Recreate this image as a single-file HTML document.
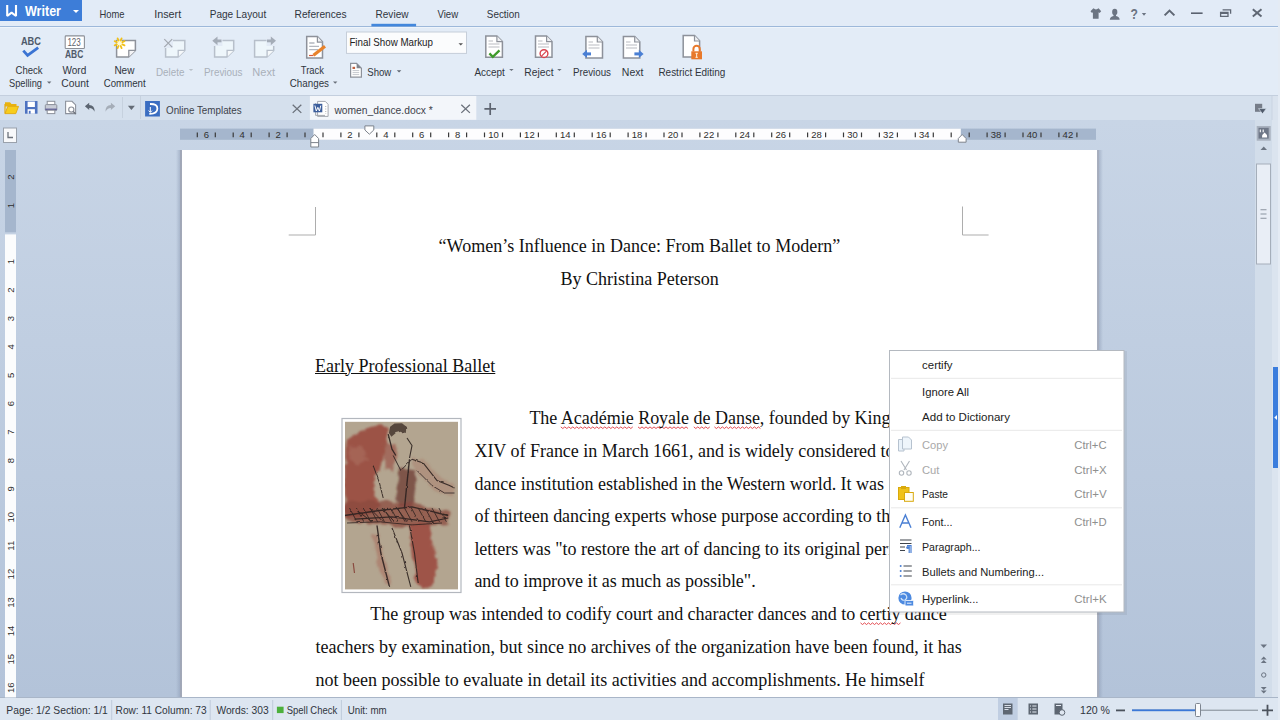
<!DOCTYPE html>
<html><head><meta charset="utf-8">
<style>
*{margin:0;padding:0;box-sizing:border-box}
html,body{width:1280px;height:720px;overflow:hidden;background:#c6d3e5;font-family:"Liberation Sans",sans-serif;color:#2b2b2b}
.a{position:absolute}
.t{position:absolute;white-space:pre;font-size:11px;line-height:13px;color:#333}
.d{position:absolute;white-space:pre;font-family:"Liberation Serif",serif;font-size:18.05px;line-height:20px;color:#111}
#menubar{left:0;top:0;width:1280px;height:26px;background:#e2ebf7}
#ribbon{left:0;top:25.5px;width:1280px;height:69.5px;background:#e3ecf7;border-top:1.5px solid #9db8da}
#qbar{left:0;top:95px;width:1280px;height:25.5px;background:#d5e0ed;border-top:1px solid #c4cfde;border-bottom:1px solid #bfcad9}
#work{left:0;top:120px;width:1280px;height:577px;background:linear-gradient(#c8d5e6,#b3c3d9)}
#status{left:0;top:697px;width:1280px;height:23px;background:#dde6f1;border-top:1px solid #a9b6c8}
#page{left:182px;top:150px;width:915px;height:547px;background:#fff}
#shl{left:176px;top:150px;width:6px;height:547px;background:linear-gradient(to right,rgba(140,155,180,0),rgba(140,155,180,.45) 60%,#a0a7b7 75%,#a3a9b8)}
#shr{left:1097px;top:150px;width:6px;height:547px;background:linear-gradient(to left,rgba(140,155,180,0),rgba(140,155,180,.45) 60%,#a6adbd 75%,#a9b0bf)}
</style></head>
<body>
<div id="menubar" class="a"></div>
<div id="ribbon" class="a"></div>
<div id="qbar" class="a"></div>
<div id="work" class="a"></div>
<div id="shl" class="a"></div><div id="shr" class="a"></div><div id="page" class="a"></div>
<div id="status" class="a"></div>

<!-- UI chrome svg -->
<svg class="a" style="left:0;top:0" width="1280" height="720" viewBox="0 0 1280 720" font-family="Liberation Sans" font-size="10.5">
<!-- Writer button -->
<rect x="0" y="0" width="82" height="21" fill="#3d7dd8"/>
<path d="M7.2,4.9 V16 L11.6,12.6 L16,16 V4.9" stroke="#fff" stroke-width="2.1" fill="none" stroke-linejoin="bevel"/>
<text x="25" y="16.2" font-size="14" font-weight="bold" fill="#fff" textLength="36" lengthAdjust="spacingAndGlyphs">Writer</text>
<path d="M73,10 L79,10 L76,13 Z" fill="#fff"/>
<!-- menu -->
<g fill="#30353d">
<text x="99.5" y="17.5" textLength="25" lengthAdjust="spacingAndGlyphs">Home</text>
<text x="154.2" y="17.5" textLength="27" lengthAdjust="spacingAndGlyphs">Insert</text>
<text x="209.7" y="17.5" textLength="56.5" lengthAdjust="spacingAndGlyphs">Page Layout</text>
<text x="294.6" y="17.5" textLength="52" lengthAdjust="spacingAndGlyphs">References</text>
<text x="375.5" y="17.5" textLength="33" lengthAdjust="spacingAndGlyphs">Review</text>
<text x="437.4" y="17.5" textLength="20.7" lengthAdjust="spacingAndGlyphs">View</text>
<text x="486.8" y="17.5" textLength="33" lengthAdjust="spacingAndGlyphs">Section</text>
</g>
<rect x="0" y="27" width="1278" height="1" fill="#eef4fb"/><rect x="371.4" y="23.8" width="44.7" height="2.6" fill="#4387dc"/>
<!-- title bar right icons -->
<g fill="#6b7482" stroke="none">
<path d="M1090.5,11.2 L1093.4,8.3 Q1096,10.6 1098.6,8.3 L1101.2,11.2 L1099.6,12.9 L1098.6,12.2 V18.8 H1092.9 V12.2 L1092,12.9 Z"/>
<ellipse cx="1114.75" cy="11.9" rx="2.6" ry="3.2"/>
<path d="M1113.5,14.5 H1116 V16 Q1119.4,16.4 1119.7,19.8 H1109.8 Q1110.1,16.4 1113.5,16 Z"/>
</g>
<text x="1130.6" y="18.8" font-size="14" font-weight="bold" fill="#6b7482" textLength="7.4" lengthAdjust="spacingAndGlyphs">?</text>
<path d="M1141.8,13.1 H1146.2 L1144,15.7 Z" fill="#6b7482"/>
<path d="M1164.6,15.4 L1169.5,10.6 L1174.4,15.4" stroke="#5f6774" stroke-width="2" fill="none"/>
<rect x="1191" y="12.4" width="11.6" height="1.6" fill="#5a6270"/>
<path d="M1222.6,9.8 H1230.6 V13.8 M1220.6,12.4 H1228 V16.3 H1220.6 Z M1220.6,13.4 H1228" stroke="#5f6774" stroke-width="1.3" fill="none"/>
<path d="M1252.8,9.3 L1261.5,16.4 M1261.5,9.3 L1252.8,16.4" stroke="#5f6774" stroke-width="2" fill="none"/>
</svg>

<!-- ribbon -->
<svg class="a" style="left:0;top:0" width="1280" height="720" viewBox="0 0 1280 720" font-family="Liberation Sans" font-size="10.5">
<!-- Check spelling -->
<text x="20.9" y="45.4" font-size="10.8" font-weight="bold" fill="#4f5a6a" textLength="20" lengthAdjust="spacingAndGlyphs">ABC</text>
<path d="M23.3,50.6 L27.6,55.4 L38.2,47.6" stroke="#3b74d3" stroke-width="2.8" fill="none"/>
<!-- Word count -->
<rect x="65.2" y="35.9" width="19.2" height="12.6" rx="0.8" fill="#fff" stroke="#8b8f97" stroke-width="1.1"/>
<text x="67.4" y="45.6" font-size="10.3" fill="#5f646d" textLength="13.4" lengthAdjust="spacingAndGlyphs">123</text>
<text x="65" y="58" font-size="10.8" font-weight="bold" fill="#4f5a6a" textLength="18.3" lengthAdjust="spacingAndGlyphs">ABC</text>
<!-- New comment -->
<path d="M116.6,40.6 H135.4 V50.4 L128.6,57 H116.6 Z" fill="#fff" stroke="#8e929b" stroke-width="1.5"/>
<path d="M135.4,50.4 H128.8 V57" fill="#f4f4f6" stroke="#8e929b" stroke-width="1.3"/>
<circle cx="119.6" cy="43.25" r="3.2" fill="#fff8d0"/><path d="M122.4,44.4 L124.5,45.3 M120.7,46.0 L121.6,48.1 M118.5,46.0 L117.6,48.1 M116.8,44.4 L114.7,45.3 M116.8,42.1 L114.7,41.2 M118.5,40.5 L117.6,38.4 M120.7,40.5 L121.6,38.4 M122.4,42.1 L124.5,41.2" stroke="#f0c01a" stroke-width="1.8" stroke-linecap="round"/>
<!-- Delete -->
<path d="M165.6,40.6 H184.8 V50.4 L178,57 H165.6 Z" fill="#eef6fb" stroke="#b7bfca" stroke-width="1.5"/>
<path d="M184.8,50.4 H178.2 V57" fill="#f6f9fb" stroke="#b7bfca" stroke-width="1.3"/>
<rect x="163" y="38" width="10" height="10" fill="#e3ebf6"/>
<path d="M164.3,39.2 L172.2,47.2 M172.2,39.2 L164.3,47.2" stroke="#a2a8b0" stroke-width="1.2"/>
<!-- Previous disabled -->
<path d="M214.6,40.6 H233.7 V50.4 L226.9,57 H214.6 Z" fill="#eef6fb" stroke="#b7bfca" stroke-width="1.5"/>
<path d="M233.7,50.4 H227.1 V57" fill="#f6f9fb" stroke="#b7bfca" stroke-width="1.3"/>
<rect x="211" y="36" width="11.5" height="10" fill="#e3ebf6"/>
<path d="M212.3,40.8 L217.5,36.4 V45.2 Z" fill="#a4acb7"/><rect x="216.5" y="39.5" width="5" height="2.8" fill="#a4acb7"/>
<!-- Next disabled -->
<path d="M254.6,40.6 H273.7 V50.4 L266.9,57 H254.6 Z" fill="#eef6fb" stroke="#b7bfca" stroke-width="1.5"/>
<path d="M273.7,50.4 H267.1 V57" fill="#f6f9fb" stroke="#b7bfca" stroke-width="1.3"/>
<rect x="266.5" y="36" width="11" height="10" fill="#e3ebf6"/>
<path d="M276,40.8 L270.8,36.4 V45.2 Z" fill="#a4acb7"/><rect x="267" y="39.5" width="4.5" height="2.8" fill="#a4acb7"/>
<!-- Track changes -->
<path d="M306.7,36.6 H317.4 L322.5,41.9 V58 H306.7 Z" fill="#fff" stroke="#8d919a" stroke-width="1.5"/>
<path d="M317.4,36.6 V42.2 H322.5" fill="#eef0f3" stroke="#8d919a" stroke-width="1.2"/>
<path d="M309.2,43 H314.5 M309.2,46.3 H319 M309.2,49.6 H318" stroke="#b3b7bf" stroke-width="1.3"/>
<path d="M313.5,55.3 L325,46.3" stroke="#e8822a" stroke-width="3.2"/>
<path d="M309,55.5 H313.5" stroke="#d55a3a" stroke-width="1.2"/>
<!-- combo -->
<rect x="346.5" y="32" width="120" height="21.4" fill="#fbfcfd" stroke="#c6ced9" stroke-width="1"/>
<text x="349.4" y="46.4" font-size="11" fill="#222" textLength="83.6" lengthAdjust="spacingAndGlyphs">Final Show Markup</text>
<path d="M458.5,43.2 H463 L460.75,45.4 Z" fill="#555"/>
<!-- show -->
<path d="M350.6,63.4 H356.6 L361.4,68.2 V77.2 H350.6 Z" fill="#fff" stroke="#8d919a" stroke-width="1.2"/><path d="M356.6,63.4 L361.4,68.2 H356.6 Z" fill="#7f848d"/>
<rect x="352.5" y="66.8" width="2.6" height="2.2" fill="#c0603f"/>
<path d="M352.6,70.6 H359.2 M352.6,72.6 H359.2 M352.6,74.6 H359.2" stroke="#b5b9c0" stroke-width="0.8"/>
<path d="M396.8,70.2 H401.3 L399.05,72.6 Z" fill="#5f6670"/>
<!-- Accept -->
<path d="M485.8,36 H496.9 L502.4,41.5 V57.2 H485.8 Z" fill="#fff" stroke="#8d919a" stroke-width="1.5"/>
<path d="M496.9,36 V41.6 H502.4" fill="#eef0f3" stroke="#8d919a" stroke-width="1.2"/>
<path d="M488.5,41 H493 M488.5,44 H499.5 M488.5,47 H499.5" stroke="#b9bcc2" stroke-width="1.2"/>
<path d="M489.4,53.4 L492.8,56.8 L499.5,50.3" stroke="#3f9b2c" stroke-width="2.3" fill="none"/>
<!-- Reject -->
<path d="M535.5,36 H546.6 L552,41.5 V57.2 H535.5 Z" fill="#fff" stroke="#8d919a" stroke-width="1.5"/>
<path d="M546.6,36 V41.6 H552" fill="#eef0f3" stroke="#8d919a" stroke-width="1.2"/>
<path d="M538,41 H542.5 M538,44 H549 M538,47 H549" stroke="#b9bcc2" stroke-width="1.2"/>
<circle cx="544" cy="53.6" r="3.9" fill="#fff" stroke="#d9434e" stroke-width="1.4"/>
<path d="M541.5,56.1 L546.5,51.1" stroke="#d9434e" stroke-width="1.2"/>
<!-- Previous -->
<path d="M585.9,36.6 H597.3 L602.5,41.9 V58 H585.9 Z" fill="#fff" stroke="#8d919a" stroke-width="1.5"/>
<path d="M597.3,36.6 V42 H602.5" fill="#eef0f3" stroke="#8d919a" stroke-width="1.2"/>
<path d="M588.5,42 H593 M588.5,45 H599.5 M588.5,48 H599.5" stroke="#b9bcc2" stroke-width="1.2"/>
<path d="M582.2,53.9 L587,49.8 V58 Z" fill="#4a7fd4"/><rect x="586" y="52.4" width="5" height="3" fill="#4a7fd4"/>
<!-- Next -->
<path d="M623.4,36.6 H634.7 L639.8,41.9 V58 H623.4 Z" fill="#fff" stroke="#8d919a" stroke-width="1.5"/>
<path d="M634.7,36.6 V42 H639.8" fill="#eef0f3" stroke="#8d919a" stroke-width="1.2"/>
<path d="M626,42 H630.5 M626,45 H637 M626,48 H637" stroke="#b9bcc2" stroke-width="1.2"/>
<path d="M643.6,53.9 L638.8,49.8 V58 Z" fill="#4a7fd4"/><rect x="634.4" y="52.4" width="5" height="3" fill="#4a7fd4"/>
<!-- Restrict -->
<path d="M683.2,35.6 H694.5 L699.6,40.9 V57 H683.2 Z" fill="#fff" stroke="#8d919a" stroke-width="1.5"/>
<path d="M694.5,35.6 V41 H699.6" fill="#eef0f3" stroke="#8d919a" stroke-width="1.2"/>
<path d="M693.4,51.5 V49 A3.2,3.2 0 0 1 699.8,49 V51.5" stroke="#e8792b" stroke-width="2" fill="none"/>
<rect x="691.3" y="51.3" width="10.7" height="8" fill="#e8792b"/>
<path d="M695.5,53.3 H697.8 M696.65,53.3 V57.3 M695.5,57.3 H697.8" stroke="#fff3e0" stroke-width="1"/>
<!-- labels -->
<g fill="#30353d">
<text x="15.5" y="73.8" textLength="27" lengthAdjust="spacingAndGlyphs">Check</text>
<text x="9" y="86.5" textLength="33" lengthAdjust="spacingAndGlyphs">Spelling</text>
<text x="62.5" y="73.8" textLength="23.8" lengthAdjust="spacingAndGlyphs">Word</text>
<text x="61.3" y="86.5" textLength="27.5" lengthAdjust="spacingAndGlyphs">Count</text>
<text x="114.4" y="73.8" textLength="20" lengthAdjust="spacingAndGlyphs">New</text>
<text x="103.8" y="86.5" textLength="41.8" lengthAdjust="spacingAndGlyphs">Comment</text>
<text x="300.8" y="73.8" textLength="23.2" lengthAdjust="spacingAndGlyphs">Track</text>
<text x="289.8" y="86.5" textLength="39.2" lengthAdjust="spacingAndGlyphs">Changes</text>
<text x="367.3" y="76" textLength="24" lengthAdjust="spacingAndGlyphs">Show</text>
<text x="474.4" y="76" textLength="30.4" lengthAdjust="spacingAndGlyphs">Accept</text>
<text x="524.3" y="76" textLength="29.2" lengthAdjust="spacingAndGlyphs">Reject</text>
<text x="573" y="76" textLength="38" lengthAdjust="spacingAndGlyphs">Previous</text>
<text x="621.8" y="76" textLength="21.6" lengthAdjust="spacingAndGlyphs">Next</text>
<text x="658.4" y="76" textLength="67" lengthAdjust="spacingAndGlyphs">Restrict Editing</text>
</g>
<g fill="#a9b0ba">
<text x="156" y="76" textLength="28.4" lengthAdjust="spacingAndGlyphs">Delete</text>
<text x="204" y="76" textLength="38.5" lengthAdjust="spacingAndGlyphs">Previous</text>
<text x="252.3" y="76" textLength="22.7" lengthAdjust="spacingAndGlyphs">Next</text>
</g>
<g fill="#6a707a">
<path d="M47,81.4 H51.4 L49.2,83.8 Z"/>
<path d="M333,81.4 H337.4 L335.2,83.8 Z"/>
<path d="M509.2,68.9 H513.6 L511.4,71.1 Z"/>
<path d="M557.2,68.9 H561.6 L559.4,71.1 Z"/>
</g>
<path d="M188.8,68.9 H193.2 L191,71.1 Z" fill="#b9c0c8"/>
</svg>

<!-- qbar -->
<svg class="a" style="left:0;top:0" width="1280" height="720" viewBox="0 0 1280 720" font-family="Liberation Sans" font-size="10.5">
<!-- folder -->
<path d="M5,102.3 H10 L11.5,104 H16.5 V106.5 H5 Z" fill="#e9b20e"/>
<path d="M5,113.6 L7.8,106.4 H18.5 L15.8,113.6 Z" fill="#f7cd1c" stroke="#e3a90c" stroke-width="0.9"/>
<path d="M5,104 V113.6" stroke="#e3a90c" stroke-width="1.2"/>
<!-- save -->
<rect x="25" y="101" width="12.5" height="12.7" fill="#4d72c0"/>
<rect x="27.6" y="101.6" width="7.3" height="5.4" fill="#fff"/>
<rect x="27.6" y="109.2" width="7.3" height="4.5" fill="#fff"/>
<rect x="28.8" y="110.8" width="1.8" height="2.9" fill="#4d72c0"/>
<!-- print -->
<rect x="47.2" y="101.3" width="7.6" height="3.4" fill="#fff" stroke="#8c919b" stroke-width="1"/>
<rect x="45.3" y="104.6" width="11.5" height="6" rx="1" fill="#c8ccd6" stroke="#8c919b" stroke-width="1"/>
<rect x="45.3" y="108.6" width="11.5" height="1.6" fill="#5f5d98"/>
<rect x="47.2" y="110.2" width="7.6" height="3.4" fill="#fff" stroke="#8c919b" stroke-width="1"/>
<!-- preview -->
<path d="M65.6,101.3 H72 L75.6,104.9 V113.6 H65.6 Z" fill="#fff" stroke="#8c919b" stroke-width="1.1"/>
<circle cx="71.3" cy="109.6" r="2.6" fill="#fff" stroke="#8c919b" stroke-width="1.2"/>
<path d="M73.2,111.5 L75.8,114" stroke="#6f747d" stroke-width="1.4"/>
<!-- undo/redo -->
<path d="M84.9,106.3 L89.2,102.7 V104.9 Q94.8,104.9 94.6,111.8 Q93,108.2 89.2,108 V110 Z" fill="#5c6571"/>
<path d="M115.2,106.3 L110.9,102.7 V104.9 Q105.3,104.9 105.5,111.8 Q107.1,108.2 110.9,108 V110 Z" fill="#a5adb8"/>
<rect x="122" y="97" width="1" height="21" fill="#c6d1de"/>
<path d="M127.9,105.7 H134.9 L131.4,110.1 Z" fill="#646b76"/>
<rect x="140" y="96" width="1" height="23" fill="#c6d1de"/>
<!-- D icon -->
<rect x="145.1" y="101" width="14.8" height="15.5" fill="#3a6dc1"/>
<path d="M150,104 Q157.6,103.8 157.4,108.8 Q157.2,114 149.3,113.8" stroke="#fff" stroke-width="1.8" fill="none"/>
<path d="M150.3,107 V112.2 M148.6,110.6 L150.3,112.4 L152,110.6" stroke="#fff" stroke-width="1" fill="none"/>
<text x="166" y="113.6" fill="#3d424a" textLength="75.7" lengthAdjust="spacingAndGlyphs">Online Templates</text>
<path d="M292.7,104.8 L301.3,112.9 M301.3,104.8 L292.7,112.9" stroke="#6a707a" stroke-width="1.3"/>
<!-- active tab -->
<rect x="309.9" y="96" width="166.4" height="23.8" fill="#f3f6fa"/>
<path d="M317.6,101.4 H325.3 L328.1,104.3 V116.4 H317.6 Z" fill="#fff" stroke="#9a9ea6" stroke-width="0.9"/>
<path d="M315.6,103.2 V115.4 H325" stroke="#9a9ea6" stroke-width="0.9" fill="none"/>
<path d="M325.7,106.6 V107 M325.7,108.8 V109.2 M325.7,111 V111.4 M325.7,113.2 V113.6" stroke="#777" stroke-width="1.2"/>
<rect x="313.4" y="103.8" width="8.9" height="8.5" fill="#3c5e9c"/>
<path d="M314.9,105.5 L316.3,111 L317.85,107.3 L319.4,111 L320.8,105.5" stroke="#fff" stroke-width="1" fill="none"/>
<text x="334.4" y="113.6" fill="#3d424a" textLength="98.4" lengthAdjust="spacingAndGlyphs">women_dance.docx *</text>
<path d="M461.3,104.8 L469.9,112.9 M469.9,104.8 L461.3,112.9" stroke="#6a707a" stroke-width="1.3"/>
<path d="M484.4,108.9 H496 M490.2,103 V114.9" stroke="#5d6470" stroke-width="1.7"/>
<!-- right tab-bar icon -->
<rect x="1255" y="103.8" width="7.2" height="8" fill="#767d89"/>
<path d="M1258.6,108.6 H1266.4 L1262.5,113.8 Z" fill="#4f5a6b" stroke="#d7e1ec" stroke-width="0.7"/>
</svg>

<!-- rulers -->
<svg class="a" style="left:0;top:0" width="1280" height="720" viewBox="0 0 1280 720" font-family="Liberation Sans">
<rect x="3.5" y="128" width="13" height="14.5" fill="#f8f9fb" stroke="#9aa1ab" stroke-width="1"/>
<path d="M8,132 V137.5 H13" stroke="#6d737c" stroke-width="1.3" fill="none"/>
<rect x="180" y="128.6" width="916" height="11.2" fill="#a5b6cd"/>
<rect x="313.5" y="128.6" width="647.3" height="11.2" fill="#fdfdfe"/>
<path d="M197.3,132.6 V137.3 M215.3,132.6 V137.3 M233.2,132.6 V137.3 M251.2,132.6 V137.3 M269.1,132.6 V137.3 M287.1,132.6 V137.3 M305.0,132.6 V137.3 M323.0,132.6 V137.3 M340.9,132.6 V137.3 M358.9,132.6 V137.3 M376.8,132.6 V137.3 M394.8,132.6 V137.3 M412.7,132.6 V137.3 M430.7,132.6 V137.3 M448.6,132.6 V137.3 M466.6,132.6 V137.3 M484.5,132.6 V137.3 M502.5,132.6 V137.3 M520.4,132.6 V137.3 M538.4,132.6 V137.3 M556.3,132.6 V137.3 M574.3,132.6 V137.3 M592.2,132.6 V137.3 M610.2,132.6 V137.3 M628.1,132.6 V137.3 M646.1,132.6 V137.3 M664.0,132.6 V137.3 M682.0,132.6 V137.3 M699.9,132.6 V137.3 M717.9,132.6 V137.3 M735.8,132.6 V137.3 M753.8,132.6 V137.3 M771.7,132.6 V137.3 M789.7,132.6 V137.3 M807.6,132.6 V137.3 M825.6,132.6 V137.3 M843.5,132.6 V137.3 M861.5,132.6 V137.3 M879.4,132.6 V137.3 M897.4,132.6 V137.3 M915.3,132.6 V137.3 M933.3,132.6 V137.3 M951.2,132.6 V137.3 M969.2,132.6 V137.3 M987.1,132.6 V137.3 M1005.1,132.6 V137.3 M1023.0,132.6 V137.3 M1041.0,132.6 V137.3 M1058.9,132.6 V137.3 M1076.9,132.6 V137.3" stroke="#3a3a3a" stroke-width="1.2"/>
<g font-size="9.5" fill="#2f2f2f"><text x="206.3" y="137.8" text-anchor="middle">6</text><text x="242.2" y="137.8" text-anchor="middle">4</text><text x="278.1" y="137.8" text-anchor="middle">2</text><text x="349.9" y="137.8" text-anchor="middle">2</text><text x="385.8" y="137.8" text-anchor="middle">4</text><text x="421.7" y="137.8" text-anchor="middle">6</text><text x="457.6" y="137.8" text-anchor="middle">8</text><text x="493.5" y="137.8" text-anchor="middle">10</text><text x="529.4" y="137.8" text-anchor="middle">12</text><text x="565.3" y="137.8" text-anchor="middle">14</text><text x="601.2" y="137.8" text-anchor="middle">16</text><text x="637.1" y="137.8" text-anchor="middle">18</text><text x="673.0" y="137.8" text-anchor="middle">20</text><text x="708.9" y="137.8" text-anchor="middle">22</text><text x="744.8" y="137.8" text-anchor="middle">24</text><text x="780.7" y="137.8" text-anchor="middle">26</text><text x="816.6" y="137.8" text-anchor="middle">28</text><text x="852.5" y="137.8" text-anchor="middle">30</text><text x="888.4" y="137.8" text-anchor="middle">32</text><text x="924.3" y="137.8" text-anchor="middle">34</text><text x="996.1" y="137.8" text-anchor="middle">38</text><text x="1032.0" y="137.8" text-anchor="middle">40</text><text x="1067.9" y="137.8" text-anchor="middle">42</text></g>
<path d="M364.9,125.9 H373.8 V130 L369.35,134.2 L364.9,130 Z" fill="#fff" stroke="#7d838c" stroke-width="1"/>
<path d="M310.8,138.5 L314.7,134.5 L318.6,138.5 V147 H310.8 Z" fill="#fff" stroke="#7d838c" stroke-width="1"/>
<path d="M310.8,142.6 H318.6" stroke="#7d838c" stroke-width="1"/>
<path d="M958.3,138.5 L962.2,134.5 L966.1,138.5 V142.2 H958.3 Z" fill="#fff" stroke="#7d838c" stroke-width="1"/>
<rect x="5" y="150" width="11" height="82.3" fill="#a5b6cd"/>
<rect x="5" y="234.4" width="11" height="463" fill="#fbfcfd"/>
<g font-size="9.5" fill="#2f2f2f"><text x="0" y="0" transform="translate(14.2,177.2) rotate(-90)" text-anchor="middle">2</text><text x="0" y="0" transform="translate(14.2,205.6) rotate(-90)" text-anchor="middle">1</text><text x="0" y="0" transform="translate(14.2,261.7) rotate(-90)" text-anchor="middle">1</text><text x="0" y="0" transform="translate(14.2,290.1) rotate(-90)" text-anchor="middle">2</text><text x="0" y="0" transform="translate(14.2,318.5) rotate(-90)" text-anchor="middle">3</text><text x="0" y="0" transform="translate(14.2,346.9) rotate(-90)" text-anchor="middle">4</text><text x="0" y="0" transform="translate(14.2,375.3) rotate(-90)" text-anchor="middle">5</text><text x="0" y="0" transform="translate(14.2,403.7) rotate(-90)" text-anchor="middle">6</text><text x="0" y="0" transform="translate(14.2,432.1) rotate(-90)" text-anchor="middle">7</text><text x="0" y="0" transform="translate(14.2,460.5) rotate(-90)" text-anchor="middle">8</text><text x="0" y="0" transform="translate(14.2,488.9) rotate(-90)" text-anchor="middle">9</text><text x="0" y="0" transform="translate(14.2,517.3) rotate(-90)" text-anchor="middle">10</text><text x="0" y="0" transform="translate(14.2,545.7) rotate(-90)" text-anchor="middle">11</text><text x="0" y="0" transform="translate(14.2,574.1) rotate(-90)" text-anchor="middle">12</text><text x="0" y="0" transform="translate(14.2,602.5) rotate(-90)" text-anchor="middle">13</text><text x="0" y="0" transform="translate(14.2,630.9) rotate(-90)" text-anchor="middle">14</text><text x="0" y="0" transform="translate(14.2,659.3) rotate(-90)" text-anchor="middle">15</text><text x="0" y="0" transform="translate(14.2,687.7) rotate(-90)" text-anchor="middle">16</text></g>
</svg>
<!-- page decorations -->
<svg class="a" style="left:0;top:0" width="1280" height="720" viewBox="0 0 1280 720" font-family="Liberation Sans">
<path d="M315.5,207 V235 H288.7 M962.5,206.5 V235 H988.6" stroke="#adadad" stroke-width="1" fill="none"/>
<polyline points="560.8,426.9 562.8,428.5 564.8,426.9 566.8,428.5 568.8,426.9 570.8,428.5 572.8,426.9 574.8,428.5 576.8,426.9 578.8,428.5 580.8,426.9 582.8,428.5 584.8,426.9 586.8,428.5 588.8,426.9 590.8,428.5 592.8,426.9 594.8,428.5 596.8,426.9 598.8,428.5 600.8,426.9 602.8,428.5 604.8,426.9 606.8,428.5 608.8,426.9 610.8,428.5 612.8,426.9 614.8,428.5 616.8,426.9 618.8,428.5 620.8,426.9 622.8,428.5 624.8,426.9 626.8,428.5 628.8,426.9 630.8,428.5 632.8,426.9" fill="none" stroke="#e0383e" stroke-width="0.9"/>
<polyline points="638.0,426.9 640.0,428.5 642.0,426.9 644.0,428.5 646.0,426.9 648.0,428.5 650.0,426.9 652.0,428.5 654.0,426.9 656.0,428.5 658.0,426.9 660.0,428.5 662.0,426.9 664.0,428.5 666.0,426.9 668.0,428.5 670.0,426.9 672.0,428.5 674.0,426.9 676.0,428.5 678.0,426.9 680.0,428.5 682.0,426.9 684.0,428.5 686.0,426.9 688.0,428.5" fill="none" stroke="#e0383e" stroke-width="0.9"/>
<polyline points="693.8,426.9 695.8,428.5 697.8,426.9 699.8,428.5 701.8,426.9 703.8,428.5 705.8,426.9 707.8,428.5 709.8,426.9" fill="none" stroke="#e0383e" stroke-width="0.9"/>
<polyline points="714.4,426.9 716.4,428.5 718.4,426.9 720.4,428.5 722.4,426.9 724.4,428.5 726.4,426.9 728.4,428.5 730.4,426.9 732.4,428.5 734.4,426.9 736.4,428.5 738.4,426.9 740.4,428.5 742.4,426.9 744.4,428.5 746.4,426.9 748.4,428.5 750.4,426.9 752.4,428.5 754.4,426.9 756.4,428.5 758.4,426.9 760.4,428.5" fill="none" stroke="#e0383e" stroke-width="0.9"/>
<polyline points="860.5,622.9 862.5,624.5 864.5,622.9 866.5,624.5 868.5,622.9 870.5,624.5 872.5,622.9 874.5,624.5 876.5,622.9 878.5,624.5 880.5,622.9 882.5,624.5 884.5,622.9 886.5,624.5 888.5,622.9 890.5,624.5 892.5,622.9 894.5,624.5 896.5,622.9 898.5,624.5 900.5,622.9" fill="none" stroke="#e0383e" stroke-width="0.9"/>
<defs><filter id="bl" x="-20%" y="-20%" width="140%" height="140%"><feTurbulence type="fractalNoise" baseFrequency="0.12" numOctaves="2" seed="3"/><feDisplacementMap in="SourceGraphic" scale="7" xChannelSelector="R" yChannelSelector="G"/><feGaussianBlur stdDeviation="1.1"/></filter><filter id="bl2" x="-20%" y="-20%" width="140%" height="140%"><feTurbulence type="fractalNoise" baseFrequency="0.2" numOctaves="1" seed="5"/><feDisplacementMap in="SourceGraphic" scale="2.5" xChannelSelector="R" yChannelSelector="G"/><feGaussianBlur stdDeviation="0.35"/></filter><clipPath id="pc"><rect x="345" y="421.8" width="113" height="167.6"/></clipPath></defs>
<rect x="342" y="418.5" width="119" height="174" fill="#fff" stroke="#b3b7be" stroke-width="1.2"/>
<rect x="345" y="421.8" width="113" height="167.6" fill="#b3a590"/>
<g clip-path="url(#pc)">
<g filter="url(#bl)">
<polygon points="345.8,439.2 358.2,433.0 369.5,426.8 383.2,424.9 388.2,429.2 385.8,443.0 383.2,459.2 379.5,468.0 374.5,476.8 373.2,488.0 377.0,498.0 379.5,508.0 373.2,513.0 354.5,518.0 344.5,516.8 345.1,468.0" fill="#9a4c40" opacity="0.92"/>
<polygon points="349.5,446.8 362.0,446.8 367.0,459.2 357.0,465.5 349.5,459.2" fill="#b07a6a" opacity="0.45"/>
<polygon points="383.2,443.0 394.5,443.0 397.0,459.2 392.0,470.5 384.5,468.0" fill="#9a5548" opacity="0.7"/>
<polygon points="398.2,468.0 414.5,470.5 415.8,486.8 412.0,508.0 398.2,508.0 397.0,488.0" fill="#6e3a33" opacity="0.75"/>
<polygon points="344.5,503.0 379.5,500.5 412.0,503.0 449.5,513.0 449.5,524.2 412.0,526.8 379.5,524.2 349.5,521.8 344.5,513.0" fill="#8b4a3f" opacity="0.75"/>
<polygon points="409.5,524.2 429.5,523.0 432.0,540.5 437.0,568.0 434.5,583.0 424.5,588.0 417.0,585.5 413.2,559.2" fill="#9d5043" opacity="0.95"/>
<polygon points="372.0,535.5 378.2,534.2 384.5,559.2 390.8,585.5 384.5,583.0 377.0,559.2" fill="#a86b5b" opacity="0.55"/>
<polygon points="412.0,458.0 424.5,460.5 439.5,478.0 454.5,485.5 452.0,495.5 437.0,493.0 422.0,476.8 414.5,470.5" fill="#a6705f" opacity="0.35"/>
</g>
<g filter="url(#bl2)" fill="none" stroke="#2e2320" opacity="0.9">
<polygon points="390.1,426.8 394.5,423.6 402.0,423.2 406.4,426.8 405.8,433.0 400.8,431.8 395.8,433.0 391.4,436.8 388.9,433.0" fill="#3a2a25" stroke="none" opacity="0.85"/>
<polyline points="388.2,434.2 392.0,449.2 395.8,455.5" stroke-width="1.3"/>
<polyline points="407.0,438.0 412.0,445.5 409.5,458.0" stroke-width="1.1"/>
<polyline points="412.0,459.2 423.2,463.0 437.0,480.5 449.5,485.5 454.5,488.0" stroke-width="1.2"/>
<polyline points="417.0,470.5 432.0,485.5 444.5,493.0 454.5,493.0" stroke-width="0.9"/>
<polyline points="373.2,465.5 379.5,483.0 383.2,498.0" stroke-width="1.0"/>
<polyline points="409.5,459.2 407.0,483.0 404.5,508.0" stroke-width="1.4"/>
<polyline points="344.5,515.5 379.5,510.5 412.0,506.8 448.2,515.5" stroke-width="1.3"/>
<polyline points="354.5,519.2 392.0,516.8 429.5,521.8 448.2,518.0" stroke-width="1.2"/>
<polyline points="357.0,510.5 372.0,521.8" stroke-width="1.0"/>
<polyline points="369.5,508.0 383.2,521.8" stroke-width="1.0"/>
<polyline points="382.0,508.0 394.5,521.8" stroke-width="1.0"/>
<polyline points="395.8,506.8 407.0,521.8" stroke-width="1.0"/>
<polyline points="349.5,508.0 357.0,521.8" stroke-width="0.9"/>
<polyline points="356.4,508.0 363.9,521.8" stroke-width="0.9"/>
<polyline points="363.2,508.0 370.8,521.8" stroke-width="0.9"/>
<polyline points="370.1,508.0 377.6,521.8" stroke-width="0.9"/>
<polyline points="377.0,508.0 384.5,521.8" stroke-width="0.9"/>
<polyline points="383.9,508.0 391.4,521.8" stroke-width="0.9"/>
<polyline points="390.8,508.0 398.2,521.8" stroke-width="0.9"/>
<polyline points="397.6,508.0 405.1,521.8" stroke-width="0.9"/>
<polyline points="404.5,508.0 412.0,521.8" stroke-width="0.9"/>
<polyline points="411.4,508.0 418.9,521.8" stroke-width="0.9"/>
<polyline points="418.2,508.0 425.8,521.8" stroke-width="0.9"/>
<polyline points="425.1,508.0 432.6,521.8" stroke-width="0.9"/>
<polyline points="432.0,508.0 439.5,521.8" stroke-width="0.9"/>
<polyline points="438.9,508.0 446.4,521.8" stroke-width="0.9"/>
<polyline points="347.0,523.0 379.5,521.8 412.0,524.9 442.0,523.0" stroke-width="0.9"/>
<polyline points="393.2,455.5 400.8,470.5 412.0,459.2" stroke-width="1"/>
<polyline points="377.0,525.5 380.8,553.0 389.5,586.8" stroke-width="1.4"/>
<polyline points="392.0,528.0 402.0,553.0 410.8,586.8" stroke-width="1.1"/>
<polyline points="409.5,525.5 414.5,553.0 418.2,583.0" stroke-width="1.1"/>
</g>
<polyline points="353.2,563.0 354.5,573.0" stroke="#8a4a3f" stroke-width="1.2" fill="none"/>
</g>
<rect x="1255" y="120" width="17" height="577" fill="#d2ddea"/>
<rect x="1272" y="120" width="8" height="577" fill="#dbe4ef"/>
<rect x="1278" y="0" width="2" height="720" fill="#e4ebf4"/><rect x="1272" y="96" width="6" height="24" fill="#dae3ee"/><rect x="1271.5" y="96" width="1" height="24" fill="#c9d4e2"/>
<rect x="1256.7" y="126" width="14" height="14.7" fill="#a8b1be"/><rect x="1258.5" y="127.8" width="10.2" height="10.8" fill="#6e7787"/><path d="M1260.3,129.5 V132.3 M1263.2,129.5 V132.3" stroke="#fff" stroke-width="1.1"/><path d="M1264.6,132.6 Q1267.6,134.8 1267.2,137.4 H1262 Q1261.6,134.8 1264.6,132.6 Z" fill="#fff"/><path d="M1260.5,150 L1263.75,146.5 L1267,150 Z" fill="#6b7482"/>
<rect x="1256.5" y="164" width="14" height="100" fill="#e9eef6" stroke="#a5aeba" stroke-width="1"/>
<path d="M1260.5,209.8 H1266.5 M1260.5,214 H1266.5 M1260.5,218.3 H1266.5" stroke="#8a939f" stroke-width="1.1"/>
<rect x="1273" y="367" width="5" height="101" fill="#3b7ddd"/>
<path d="M1274.3,417.5 L1277,415 V420 Z" fill="#fff"/>
<path d="M1260.5,644.5 L1263.75,648 L1267,644.5 Z" fill="#6b7482"/>
<path d="M1260.8,659.5 L1263.75,656.5 L1266.7,659.5 Z M1260.8,663 L1263.75,660 L1266.7,663 Z" fill="#6b7482"/>
<circle cx="1263.75" cy="675" r="2.2" fill="none" stroke="#6b7482" stroke-width="1"/>
<path d="M1260.8,687 L1263.75,690 L1266.7,687 Z M1260.8,690.5 L1263.75,693.5 L1266.7,690.5 Z" fill="#6b7482"/>
</svg>
<!-- document text -->
<div class="d" style="left:438.6px;top:235.6px">“Women’s Influence in Dance: From Ballet to Modern”</div>
<div class="d" style="left:560.5px;top:269px">By Christina Peterson</div>
<div class="d" style="left:315px;top:355.5px;text-decoration:underline">Early Professional Ballet</div>
<div class="d" style="left:529.4px;top:408.1px;letter-spacing:-0.03px">The Académie Royale de Danse, founded by King Louis</div>
<div class="d" style="left:474.4px;top:440.9px;letter-spacing:-0.03px">XIV of France in March 1661, and is widely considered to be</div>
<div class="d" style="left:474.4px;top:473.5px;letter-spacing:-0.03px">dance institution established in the Western world. It was</div>
<div class="d" style="left:474.4px;top:505.9px;letter-spacing:-0.03px">of thirteen dancing experts whose purpose according to the</div>
<div class="d" style="left:474.4px;top:538.7px;letter-spacing:-0.03px">letters was "to restore the art of dancing to its original perfection</div>
<div class="d" style="left:474.4px;top:571.2px;letter-spacing:-0.04px">and to improve it as much as possible".</div>
<div class="d" style="left:370.3px;top:604.0px;letter-spacing:-0.05px">The group was intended to codify court and character dances and to certiy dance</div>
<div class="d" style="left:315.6px;top:636.5px;letter-spacing:-0.017px">teachers by examination, but since no archives of the organization have been found, it has</div>
<div class="d" style="left:315.6px;top:670.1px;letter-spacing:-0.03px">not been possible to evaluate in detail its activities and accomplishments. He himself</div>

<!-- status bar & context menu -->
<svg class="a" style="left:0;top:0" width="1280" height="720" viewBox="0 0 1280 720" font-family="Liberation Sans" font-size="10.5">
<g fill="#30353d">
<text x="6.3" y="713.8" textLength="101.5" lengthAdjust="spacingAndGlyphs">Page: 1/2 Section: 1/1</text>
<text x="115.6" y="713.8" textLength="91" lengthAdjust="spacingAndGlyphs">Row: 11 Column: 73</text>
<text x="216.4" y="713.8" textLength="52.3" lengthAdjust="spacingAndGlyphs">Words: 303</text>
<text x="286.7" y="713.8" textLength="50.5" lengthAdjust="spacingAndGlyphs">Spell Check</text>
<text x="347.7" y="713.8" textLength="39" lengthAdjust="spacingAndGlyphs">Unit: mm</text>
<text x="1080" y="713.8" textLength="30" lengthAdjust="spacingAndGlyphs">120 %</text>
</g>
<path d="M111.7,700 V720 M210.2,700 V720 M272.7,700 V720 M341.4,700 V720" stroke="#bfcbdb" stroke-width="1"/>
<rect x="276.9" y="706.7" width="6.7" height="6.4" fill="#4cb03c"/>
<rect x="998" y="698" width="19.7" height="22" fill="#c0cee2"/>
<rect x="1003" y="703.5" width="9.5" height="11" fill="#5d6672"/><path d="M1004.5,705.5 H1011 M1004.5,707.5 H1011 M1004.5,709.5 H1008.5" stroke="#e6ecf4" stroke-width="0.9"/>
<rect x="1028.5" y="703.5" width="9.5" height="11" fill="#5d6672"/><path d="M1030,706 H1031 M1032.3,706 H1036.5 M1030,709 H1031 M1032.3,709 H1036.5 M1030,712 H1031 M1032.3,712 H1036.5" stroke="#e6ecf4" stroke-width="1"/>
<rect x="1054.5" y="703.5" width="8" height="11" fill="#5d6672"/><path d="M1056,705.5 H1061" stroke="#e6ecf4" stroke-width="1"/><circle cx="1062" cy="712.5" r="2.8" fill="#dfe7f1" stroke="#5d6672" stroke-width="1"/>
<rect x="1116" y="709.5" width="9" height="1.8" fill="#4b525c"/>
<rect x="1132" y="709.6" width="126" height="1.4" fill="#9aa3ad"/>
<rect x="1132" y="709.4" width="66" height="1.8" fill="#3b78d8"/>
<rect x="1195.5" y="703.5" width="5" height="13" rx="1" fill="#fafbfc" stroke="#7d8590" stroke-width="1"/>
<path d="M1262,710.3 H1273 M1267.5,704.8 V715.8" stroke="#4b525c" stroke-width="1.8"/>
<rect x="890" y="351" width="237" height="264" fill="#000" opacity="0.06"/>
<rect x="889.5" y="350.5" width="234.5" height="261.5" fill="#fff" stroke="#b4b9c0" stroke-width="1"/>
<path d="M891,378.3 H1122 M891,430.3 H1122 M891,507.8 H1122 M891,584.8 H1122" stroke="#e8e8e8" stroke-width="1"/>
<g font-size="11.5" fill="#222">
<text x="922.1" y="368.8" textLength="30.4" lengthAdjust="spacingAndGlyphs">certify</text>
<text x="922" y="396.4" textLength="47" lengthAdjust="spacingAndGlyphs">Ignore All</text>
<text x="922" y="421" textLength="88" lengthAdjust="spacingAndGlyphs">Add to Dictionary</text>
<text x="922" y="498.4" textLength="26" lengthAdjust="spacingAndGlyphs">Paste</text>
<text x="922" y="526.2" textLength="30.5" lengthAdjust="spacingAndGlyphs">Font...</text>
<text x="922" y="550.8" textLength="58.5" lengthAdjust="spacingAndGlyphs">Paragraph...</text>
<text x="922" y="575.6" textLength="122" lengthAdjust="spacingAndGlyphs">Bullets and Numbering...</text>
<text x="922" y="602.9" textLength="56.5" lengthAdjust="spacingAndGlyphs">Hyperlink...</text>
</g>
<g font-size="11.5" fill="#a8a8a8">
<text x="922" y="449.4" textLength="26" lengthAdjust="spacingAndGlyphs">Copy</text>
<text x="922" y="473.8" textLength="17.5" lengthAdjust="spacingAndGlyphs">Cut</text>
</g>
<g font-size="11.5" fill="#8f8f8f">
<text x="1074.3" y="449.4" textLength="32.3" lengthAdjust="spacingAndGlyphs">Ctrl+C</text>
<text x="1074.3" y="473.8" textLength="32.3" lengthAdjust="spacingAndGlyphs">Ctrl+X</text>
<text x="1074.3" y="498.4" textLength="32.3" lengthAdjust="spacingAndGlyphs">Ctrl+V</text>
<text x="1074.3" y="526.2" textLength="32.3" lengthAdjust="spacingAndGlyphs">Ctrl+D</text>
<text x="1074.3" y="602.9" textLength="32.3" lengthAdjust="spacingAndGlyphs">Ctrl+K</text>
</g>
<path d="M898.5,439.5 H904 V451 H898.5 Z" fill="#e9f2fa" stroke="#b6c2cf" stroke-width="1"/><path d="M902.5,437 H908.5 L911.5,440 V449 H902.5 Z" fill="#eef5fb" stroke="#b6c2cf" stroke-width="1"/>
<path d="M901,461 L906.5,470 M909.5,461 L904,470" stroke="#b0b6bd" stroke-width="1.1"/><circle cx="901.5" cy="473" r="2.2" fill="none" stroke="#b0b6bd" stroke-width="1.1"/><circle cx="909" cy="473" r="2.2" fill="none" stroke="#b0b6bd" stroke-width="1.1"/>
<rect x="898.5" y="487.5" width="10.5" height="12" fill="#efc21a" stroke="#d9a90c" stroke-width="1"/><rect x="901" y="486" width="5" height="3" fill="#d9a90c"/><rect x="904.5" y="492.5" width="8.8" height="8.8" fill="#fffef5" stroke="#d9a90c" stroke-width="1"/>
<path d="M899.8,527.7 L905.4,515 L911,527.7 M901.8,523 H909" stroke="#4a7fd4" stroke-width="1.4" fill="none"/>
<path d="M900,540 H911.5 M900,543.5 H911.5 M900,547 H905 M900,550.5 H905" stroke="#3f444c" stroke-width="1.1"/><path d="M907,545.5 H911 V553 M909.2,545.5 V553" stroke="#4a7fd4" stroke-width="1.2" fill="none"/><circle cx="907.8" cy="547.5" r="1.6" fill="#4a7fd4"/>
<g fill="#4a7fd4"><circle cx="900.7" cy="566" r="1"/><circle cx="900.7" cy="571" r="1"/><circle cx="900.7" cy="576" r="1"/></g><path d="M903.5,566 H911.8 M903.5,571 H911.8 M903.5,576 H911.8" stroke="#3f444c" stroke-width="1.1"/>
<circle cx="905" cy="598" r="6.6" fill="#4d8ae0"/><path d="M900.5,595 Q903,592.5 906,595 Q908,598 905,600 Q902,601 901,598" stroke="#cfe2f8" stroke-width="1.2" fill="none"/><rect x="905" y="600.5" width="8.6" height="5.4" rx="1" fill="#4d8ae0" stroke="#fff" stroke-width="0.8"/><path d="M907,603.2 H911.5" stroke="#fff" stroke-width="0.9"/>
</svg>
</body></html>
